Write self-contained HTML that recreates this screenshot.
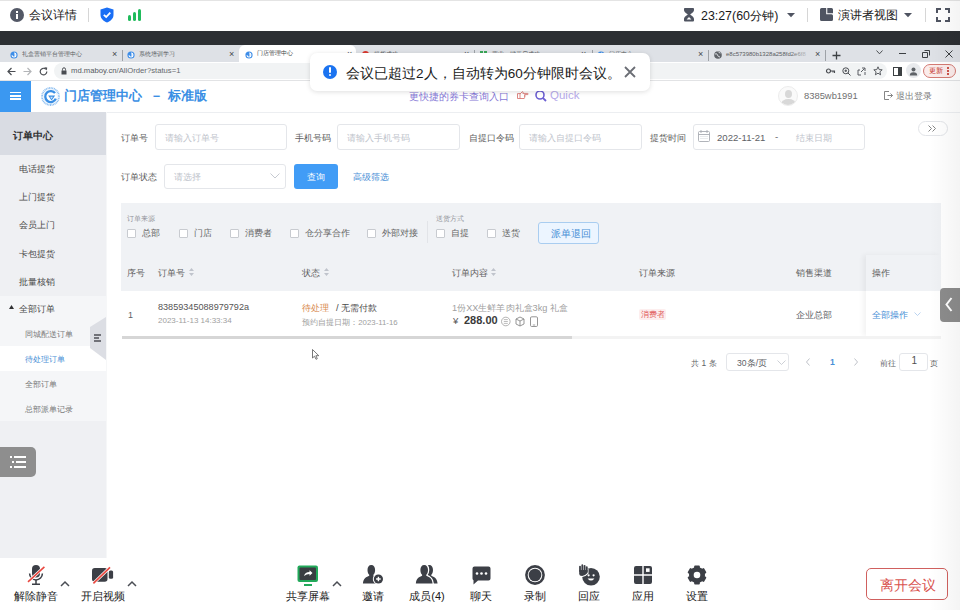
<!DOCTYPE html>
<html><head><meta charset="utf-8">
<style>
*{margin:0;padding:0;box-sizing:border-box}
html,body{width:960px;height:610px;overflow:hidden;background:#fff;font-family:"Liberation Sans",sans-serif}
.a{position:absolute}
.t{position:absolute;white-space:nowrap;line-height:1}
svg{position:absolute;overflow:visible}
.nocjk .cj{-webkit-text-stroke:0.04em currentColor}
.nocjk .cjb{-webkit-text-stroke:0.1em currentColor}
</style></head><body>
<!-- meeting top bar -->
<div class="a" style="left:0;top:0;width:960px;height:1px;background:#e4e4e4"></div>
<div class="a" style="left:10px;top:8px;width:14px;height:14px;border-radius:50%;background:#535866"></div>
<div class="a" style="left:16px;top:11px;width:2px;height:2px;background:#fff"></div>
<div class="a" style="left:16px;top:14px;width:2px;height:5px;background:#fff"></div>
<div class="t" style="left:29px;top:9px;font-size:12px;color:#1a1a1a;width:48.3px;text-align-last:justify">会议详情</div>
<div class="a" style="left:88px;top:8px;width:1px;height:14px;background:#d6d6d6"></div>
<svg style="left:100px;top:7px" width="14" height="16" viewBox="0 0 14 16"><path d="M7 0.5 L13.5 2.5 V8 C13.5 11.5 10.5 14 7 15.5 C3.5 14 0.5 11.5 0.5 8 V2.5 Z" fill="#1a6ff5"/><path d="M3.8 7.8 L6.2 10 L10.3 5.6" stroke="#fff" stroke-width="1.8" fill="none"/></svg>
<div class="a" style="left:128px;top:15px;width:3px;height:6px;background:#20bb5c;border-radius:1.5px"></div>
<div class="a" style="left:133px;top:12px;width:3px;height:9px;background:#20bb5c;border-radius:1.5px"></div>
<div class="a" style="left:138px;top:9px;width:3px;height:12px;background:#20bb5c;border-radius:1.5px"></div>

<svg style="left:683px;top:7px" width="12" height="15" viewBox="0 0 12 15"><path d="M1.8 1 H10.2 Q11 1 11 2 V3 C11 5.5 8 6.5 7.3 7.5 C8 8.5 11 9.5 11 12 V13.5 Q11 14.6 10 14.6 H2 Q1 14.6 1 13.5 V12 C1 9.5 4 8.5 4.7 7.5 C4 6.5 1 5.5 1 3 V2 Q1 1 1.8 1Z" fill="#4f5461"/><path d="M3.6 12.6 H8.4 L6 9.9Z" fill="#fff"/></svg>
<div class="t" style="left:701px;top:9.5px;font-size:12.4px;color:#1a1a1a;width:77.3px;text-align-last:justify">23:27(60分钟)</div>
<svg style="left:787px;top:13px" width="8" height="5"><path d="M0 0 H8 L4 4.2 Z" fill="#4f5461"/></svg>
<div class="a" style="left:807px;top:8px;width:1px;height:14px;background:#d6d6d6"></div>
<svg style="left:819.5px;top:8.2px" width="13" height="13" viewBox="0 0 13 13"><path d="M1.5 0 H6.2 V6.3 H11.5 A1.5 1.5 0 0 1 13 7.8 V11.5 A1.5 1.5 0 0 1 11.5 13 H1.5 A1.5 1.5 0 0 1 0 11.5 V1.5 A1.5 1.5 0 0 1 1.5 0Z M7.3 0 H11.5 A1.5 1.5 0 0 1 13 1.5 V5.3 H7.3Z" fill="#4f5461"/></svg>
<div class="t" style="left:838px;top:9px;font-size:12px;color:#1a1a1a;width:60.3px;text-align-last:justify">演讲者视图</div>
<svg style="left:903.5px;top:13px" width="8" height="5"><path d="M0 0 H8 L4 4.2 Z" fill="#4f5461"/></svg>
<div class="a" style="left:925px;top:8px;width:1px;height:14px;background:#d6d6d6"></div>
<svg style="left:936px;top:8px" width="14" height="14" viewBox="0 0 14 14"><path d="M1 5 V1 H5 M9 1 H13 V5 M13 9 V13 H9 M5 13 H1 V9" stroke="#4f5461" stroke-width="2" fill="none"/></svg>

<!-- dark bar -->
<div class="a" style="left:0;top:31px;width:960px;height:14px;background:#2c2f33"></div>

<!-- tab bar -->
<div class="a" style="left:0;top:45px;width:960px;height:17px;background:#dee1e6"></div>

<div class="a" style="left:0;top:62px;width:960px;height:18px;background:#fff"></div>
<!-- tab 1 -->
<svg style="left:10px;top:50.5px" width="8" height="8" viewBox="0 0 8 8"><circle cx="4" cy="4" r="3.6" fill="#3d8de8"/><path d="M2 4.2 A2 2 0 1 0 4 2 M4 4 H6" stroke="#fff" stroke-width="1.1" fill="none"/></svg>
<div class="t" style="left:22px;top:50.5px;font-size:6px;color:#5a5d62;width:60.3px;text-align-last:justify">礼盒营销平台管理中心</div>
<div class="t" style="left:112px;top:49.5px;font-size:9px;color:#45484d">×</div>
<div class="a" style="left:122px;top:49.5px;width:1px;height:11px;background:#9ea2a7"></div>
<!-- tab 2 -->
<svg style="left:127px;top:50.5px" width="8" height="8" viewBox="0 0 8 8"><circle cx="4" cy="4" r="3.6" fill="#3d8de8"/><path d="M2 4.2 A2 2 0 1 0 4 2 M4 4 H6" stroke="#fff" stroke-width="1.1" fill="none"/></svg>
<div class="t" style="left:139px;top:50.5px;font-size:6px;color:#5a5d62;width:36.3px;text-align-last:justify">系统培训学习</div>
<div class="t" style="left:229px;top:49.5px;font-size:9px;color:#45484d">×</div>
<!-- active tab 3 -->
<div class="a" style="left:239px;top:45px;width:117px;height:17px;background:#fff;border-radius:6px 6px 0 0"></div>
<svg style="left:245px;top:50.5px" width="8" height="8" viewBox="0 0 8 8"><circle cx="4" cy="4" r="3.6" fill="#3d8de8"/><path d="M2 4.2 A2 2 0 1 0 4 2 M4 4 H6" stroke="#fff" stroke-width="1.1" fill="none"/></svg>
<div class="t" style="left:257px;top:50px;font-size:6px;color:#3c3f44;width:36.3px;text-align-last:justify">门店管理中心</div>
<div class="t" style="left:347px;top:49.5px;font-size:9px;color:#45484d">×</div>
<!-- tab 4 -->
<div class="a" style="left:362px;top:50.5px;width:7px;height:7px;border-radius:50%;background:#d93a30"></div>
<div class="t" style="left:374px;top:50.5px;font-size:6px;color:#5a5d62;width:24.3px;text-align-last:justify">提货成功</div>
<div class="t" style="left:464px;top:49.5px;font-size:9px;color:#45484d">×</div>
<div class="a" style="left:474px;top:49.5px;width:1px;height:11px;background:#9ea2a7"></div>
<!-- tab 5 -->
<div class="a" style="left:480px;top:50.5px;width:3px;height:3px;background:#3aa757"></div>
<div class="a" style="left:484px;top:50.5px;width:3px;height:3px;background:#3aa757"></div>
<div class="a" style="left:480px;top:54.5px;width:3px;height:3px;background:#3aa757"></div>
<div class="a" style="left:484px;top:54.5px;width:3px;height:3px;background:#f3b300"></div>
<div class="t" style="left:492px;top:50.5px;font-size:6px;color:#5a5d62;width:48.3px;text-align-last:justify">营业一键开启成功</div>
<div class="t" style="left:581px;top:49.5px;font-size:9px;color:#45484d">×</div>
<div class="a" style="left:592px;top:49.5px;width:1px;height:11px;background:#9ea2a7"></div>
<!-- tab 6 -->
<svg style="left:597px;top:50.5px" width="8" height="8" viewBox="0 0 8 8"><circle cx="4" cy="4" r="3.6" fill="#3d8de8"/><path d="M2 4.2 A2 2 0 1 0 4 2 M4 4 H6" stroke="#fff" stroke-width="1.1" fill="none"/></svg>
<div class="t" style="left:609px;top:50.5px;font-size:6px;color:#5a5d62;width:24.3px;text-align-last:justify">门店中心</div>
<div class="t" style="left:698px;top:49.5px;font-size:9px;color:#45484d">×</div>
<div class="a" style="left:708px;top:49.5px;width:1px;height:11px;background:#9ea2a7"></div>
<!-- tab 7 -->
<svg style="left:714px;top:50.5px" width="8" height="8" viewBox="0 0 8 8"><circle cx="4" cy="4" r="3.8" fill="#5f6368"/><path d="M1 3 Q3 2 3.5 4 T6 6 M4 0.5 Q5 2 6.5 2" stroke="#dee1e6" stroke-width="1" fill="none"/></svg>
<div class="t" style="left:726px;top:50.5px;font-size:6px;color:#5a5d62">e8c573980b1328a258fd2e6f8</div>
<div class="a" style="left:790px;top:45px;width:22px;height:17px;background:linear-gradient(90deg,rgba(222,225,230,0),#dee1e6)"></div>
<div class="t" style="left:815px;top:49.5px;font-size:9px;color:#45484d">×</div>
<div class="a" style="left:825px;top:49.5px;width:1px;height:11px;background:#9ea2a7"></div>
<svg style="left:832px;top:50.5px" width="9" height="9"><path d="M4.5 0.5 V8.5 M0.5 4.5 H8.5" stroke="#3c4043" stroke-width="1.3"/></svg>
<svg style="left:876px;top:50px" width="7" height="5"><path d="M0.5 0.5 L3.5 3.8 L6.5 0.5" stroke="#3c4043" stroke-width="0.9" fill="none"/></svg>
<div class="a" style="left:899px;top:53px;width:7px;height:1px;background:#3c4043"></div>
<svg style="left:922px;top:50px" width="8" height="8"><path d="M2.5 0.5 H7.5 V5.5 M0.5 2.5 H5.5 V7.5 H0.5 Z" stroke="#3c4043" stroke-width="1" fill="none"/></svg>
<svg style="left:945px;top:50px" width="8" height="8"><path d="M0.5 0.5 L7.5 7.5 M7.5 0.5 L0.5 7.5" stroke="#3c4043" stroke-width="1"/></svg>
<!-- address row -->
<svg style="left:7px;top:67px" width="9" height="9"><path d="M8.5 4.5 H1 M4.5 1 L1 4.5 L4.5 8" stroke="#4a4d52" stroke-width="1.2" fill="none"/></svg>
<svg style="left:23px;top:67px" width="9" height="9"><path d="M0.5 4.5 H8 M4.5 1 L8 4.5 L4.5 8" stroke="#b3b5b8" stroke-width="1.2" fill="none"/></svg>
<svg style="left:39px;top:67px" width="9" height="9"><path d="M7.8 4.5 A3.3 3.3 0 1 1 6.8 2.2" stroke="#4a4d52" stroke-width="1.2" fill="none"/><path d="M5.2 0.3 L8.2 0.6 L7.9 3.6Z" fill="#4a4d52"/></svg>
<div class="a" style="left:54px;top:63px;width:833px;height:16px;border-radius:8px;background:#f1f3f4"></div>
<svg style="left:61px;top:67px" width="6" height="8"><path d="M1.5 3.5 V2.3 A1.5 1.5 0 0 1 4.5 2.3 V3.5" stroke="#4a4d52" stroke-width="1" fill="none"/><rect x="0.5" y="3.5" width="5" height="4" fill="#4a4d52"/></svg>
<div class="t" style="left:71px;top:67px;font-size:7.7px;color:#55595e">md.maboy.cn<span style="color:#65696e">/AllOrder?status=1</span></div>
<svg style="left:826px;top:68px" width="9" height="6"><circle cx="2.5" cy="3" r="2" stroke="#4a4d52" stroke-width="1.2" fill="none"/><path d="M4.5 3 H8.5 V5 M7 3 V4.5" stroke="#4a4d52" stroke-width="1.1" fill="none"/></svg>
<svg style="left:842px;top:67px" width="9" height="9"><circle cx="3.8" cy="3.8" r="3" stroke="#4a4d52" stroke-width="1" fill="none"/><path d="M6 6 L8.5 8.5 M2.5 3.8 H5 M3.8 2.5 V5" stroke="#4a4d52" stroke-width="1" fill="none"/></svg>
<svg style="left:857px;top:67px" width="9" height="9"><path d="M4 8 H1 V3 H3 M8 8 V5 M4 5 L7.5 1.5 M5 1 H8 V4" stroke="#4a4d52" stroke-width="0.9" fill="none"/></svg>
<svg style="left:873px;top:66px" width="10" height="10"><path d="M5 0.8 L6.2 3.6 L9.2 3.8 L6.9 5.8 L7.6 8.8 L5 7.2 L2.4 8.8 L3.1 5.8 L0.8 3.8 L3.8 3.6Z" stroke="#4a4d52" stroke-width="0.9" fill="none"/></svg>
<svg style="left:893px;top:67px" width="9" height="9"><rect x="0.5" y="0.5" width="8" height="8" stroke="#3c4043" stroke-width="1" fill="none"/><rect x="5" y="0.5" width="3.5" height="8" fill="#3c4043"/></svg>
<div class="a" style="left:906px;top:63px;width:15px;height:15px;border-radius:50%;background:#e8eaed"></div>
<svg style="left:909px;top:67px" width="9" height="9"><circle cx="4.5" cy="2.6" r="2" fill="#5f6368"/><path d="M0.8 8.5 A3.7 3.2 0 0 1 8.2 8.5Z" fill="#5f6368"/></svg>
<div class="a" style="left:923px;top:64px;width:33px;height:14px;border-radius:7px;border:1px solid #d47a73;background:#fbeceb"></div>
<div class="t" style="left:929px;top:67px;font-size:7px;color:#c5382e;width:14.3px;text-align-last:justify">更新</div>
<div class="a" style="left:947px;top:67px;width:1.5px;height:1.5px;background:#c5382e;border-radius:50%"></div>
<div class="a" style="left:947px;top:70px;width:1.5px;height:1.5px;background:#c5382e;border-radius:50%"></div>
<div class="a" style="left:947px;top:73px;width:1.5px;height:1.5px;background:#c5382e;border-radius:50%"></div>


<!-- address bar -->

<div class="a" style="left:0;top:80px;width:960px;height:1px;background:#e2e3e5"></div>

<!-- site header -->
<div class="a" style="left:0;top:81px;width:960px;height:31px;background:#fff"></div>
<div class="a" style="left:0;top:81px;width:31px;height:31px;background:#3b98f1"></div>
<div class="a" style="left:0;top:112px;width:960px;height:1px;background:#eceef1"></div>
<!-- hamburger -->
<div class="a" style="left:10px;top:91.5px;width:11px;height:1.8px;background:#fff"></div>
<div class="a" style="left:10px;top:94.9px;width:11px;height:1.8px;background:#fff"></div>
<div class="a" style="left:10px;top:98.3px;width:11px;height:1.8px;background:#fff"></div>
<!-- logo -->
<svg style="left:41px;top:87px" width="19" height="19" viewBox="0 0 19 19"><circle cx="9.5" cy="9.5" r="8.5" stroke="#8cbef0" stroke-width="1.8" stroke-dasharray="1 0.6" fill="none"/><circle cx="9.5" cy="9.5" r="6.9" stroke="#d6e8fa" stroke-width="0.6" fill="none"/><path d="M14 6.2 C12.3 3.8 8.3 3.4 5.9 5.6 C3.5 7.8 3.8 12 6.5 14 C9.5 16.2 13.6 14.8 14.8 11.6" stroke="#3a8fe4" stroke-width="2.3" fill="none"/><path d="M7.2 8.6 H14.2 L10.5 13.6Z" fill="#3a8fe4"/><path d="M9.2 9.8 H12 L10.5 12Z" fill="#cfe4fa"/></svg>
<div class="t" style="left:64px;top:89px;font-size:13.4px;font-weight:bold;color:#3a8fe4;width:143.3px;text-align-last:justify">门店管理中心<span style="display:inline-block;width:8px"></span>－<span style="display:inline-block;width:5px"></span>标准版</div>
<div class="t" style="left:409px;top:92px;font-size:9.9px;color:#8577d6;width:100.3px;text-align-last:justify">更快捷的券卡查询入口</div>
<svg style="left:517px;top:91px" width="12" height="8" viewBox="0 0 12 8"><path d="M0.5 2.6 H3 V7.5 H0.5Z M3 3 L5.2 0.8 Q5.9 0.4 6.1 1.2 L5.8 2.4 H10.8 Q11.7 2.8 10.8 3.6 H7.6 M3 7.5 H7.2 Q7.8 7.2 7.6 6.3 M7.6 3.6 V6.3 M7.6 5 H8.6" stroke="#d66a66" stroke-width="0.8" fill="none"/></svg>
<svg style="left:535px;top:90px" width="12" height="12" viewBox="0 0 12 12"><circle cx="5" cy="5" r="4" stroke="#6c5fd3" stroke-width="1.6" fill="none"/><path d="M7.8 7.8 L11 11" stroke="#6c5fd3" stroke-width="1.8"/></svg>
<div class="t" style="left:550px;top:90px;font-size:11.5px;color:#b6aaea">Quick</div>
<div class="a" style="left:778px;top:86px;width:20px;height:20px;border-radius:50%;border:1px solid #ececec;background:#fafafa;overflow:hidden"><div class="a" style="left:6px;top:3px;width:7px;height:8px;border-radius:50%;background:#d8d8d8"></div><div class="a" style="left:2px;top:12px;width:15px;height:10px;border-radius:50% 50% 0 0;background:#d8d8d8"></div></div>
<div class="t" style="left:804px;top:91px;font-size:9.4px;color:#707070">8385wb1991</div>
<svg style="left:884px;top:91px" width="9" height="9" viewBox="0 0 9 9"><path d="M5 0.5 H0.5 V8.5 H5 M3.5 4.5 H8.5 M6.5 2.5 L8.5 4.5 L6.5 6.5" stroke="#777" stroke-width="0.9" fill="none"/></svg>
<div class="t" style="left:896px;top:92px;font-size:9px;color:#777;width:36.3px;text-align-last:justify">退出登录</div>


<!-- sidebar -->
<div class="a" style="left:0;top:112px;width:106px;height:446px;background:#eff0f3"></div>
<div class="a" style="left:0;top:112px;width:106px;height:43px;background:#d9dce3"></div>
<div class="t" style="left:13px;top:130.5px;font-size:10px;font-weight:bold;color:#303133;width:40.3px;text-align-last:justify">订单中心</div>
<div class="t" style="left:19px;top:164.5px;font-size:9px;color:#4a4a4a;width:36.3px;text-align-last:justify">电话提货</div>
<div class="t" style="left:19px;top:192.5px;font-size:9px;color:#4a4a4a;width:36.3px;text-align-last:justify">上门提货</div>
<div class="t" style="left:19px;top:220.5px;font-size:9px;color:#4a4a4a;width:36.3px;text-align-last:justify">会员上门</div>
<div class="t" style="left:19px;top:249.5px;font-size:9px;color:#4a4a4a;width:36.3px;text-align-last:justify">卡包提货</div>
<div class="t" style="left:19px;top:277.5px;font-size:9px;color:#4a4a4a;width:36.3px;text-align-last:justify">批量核销</div>
<div class="a" style="left:0;top:296px;width:106px;height:125px;background:#f5f6f8"></div>
<svg style="left:9px;top:305px" width="5" height="4"><path d="M0 4 L2.5 0 L5 4Z" fill="#303133"/></svg>
<div class="t" style="left:19px;top:304.5px;font-size:9px;color:#4a4a4a;width:36.3px;text-align-last:justify">全部订单</div>
<div class="t" style="left:25px;top:331px;font-size:8.2px;color:#7a7a7a;width:48.3px;text-align-last:justify">同城配送订单</div>
<div class="a" style="left:0;top:346px;width:106px;height:25px;background:#fff"></div>
<div class="t" style="left:25px;top:356px;font-size:8.2px;color:#4a8fd6;width:40.3px;text-align-last:justify">待处理订单</div>
<div class="t" style="left:25px;top:381px;font-size:8.2px;color:#7a7a7a;width:32.3px;text-align-last:justify">全部订单</div>
<div class="t" style="left:25px;top:406px;font-size:8.2px;color:#7a7a7a;width:48.3px;text-align-last:justify">总部派单记录</div>
<svg style="left:90px;top:317px" width="16" height="43" viewBox="0 0 16 43"><path d="M0 10 L16 0 V43 L0 31Z" fill="#dcdee4"/><path d="M4 18 H11 M4 21 H9 M4 24 H11" stroke="#4d4f55" stroke-width="1.4"/></svg>
<div class="a" style="left:0;top:447px;width:36px;height:30px;border-radius:0 5px 5px 0;background:#8e8e8e"></div>
<div class="a" style="left:10px;top:456px;width:2px;height:2px;background:#fff"></div>
<div class="a" style="left:14px;top:456px;width:12px;height:2px;background:#fff"></div>
<div class="a" style="left:12px;top:461px;width:2px;height:2px;background:#fff"></div>
<div class="a" style="left:16px;top:461px;width:10px;height:2px;background:#fff"></div>
<div class="a" style="left:10px;top:466px;width:2px;height:2px;background:#fff"></div>
<div class="a" style="left:14px;top:466px;width:12px;height:2px;background:#fff"></div>


<!-- filter panel gray -->
<div class="a" style="left:121px;top:203px;width:820px;height:88px;background:#f0f2f5"></div>
<!-- main form -->
<div class="a" style="left:106px;top:112px;width:1px;height:446px;background:#f6f7f8"></div>
<div class="t" style="left:121px;top:134px;font-size:9px;color:#606060;width:27.3px;text-align-last:justify">订单号</div>
<div class="a" style="left:155px;top:124px;width:132px;height:26px;border:1px solid #e4e6ea;border-radius:3px;background:#fff"></div>
<div class="t" style="left:165px;top:134px;font-size:8.8px;color:#c0c4cc;width:54.3px;text-align-last:justify">请输入订单号</div>
<div class="t" style="left:295px;top:134px;font-size:9px;color:#606060;width:36.3px;text-align-last:justify">手机号码</div>
<div class="a" style="left:337px;top:124px;width:123px;height:26px;border:1px solid #e4e6ea;border-radius:3px;background:#fff"></div>
<div class="t" style="left:347px;top:134px;font-size:8.8px;color:#c0c4cc;width:63.3px;text-align-last:justify">请输入手机号码</div>
<div class="t" style="left:469px;top:134px;font-size:9px;color:#606060;width:45.3px;text-align-last:justify">自提口令码</div>
<div class="a" style="left:519px;top:124px;width:123px;height:26px;border:1px solid #e4e6ea;border-radius:3px;background:#fff"></div>
<div class="t" style="left:529px;top:134px;font-size:8.8px;color:#c0c4cc;width:72.3px;text-align-last:justify">请输入自提口令码</div>
<div class="t" style="left:650px;top:134px;font-size:9px;color:#606060;width:36.3px;text-align-last:justify">提货时间</div>
<div class="a" style="left:693px;top:124px;width:172px;height:26px;border:1px solid #e4e6ea;border-radius:3px;background:#fff"></div>
<svg style="left:698px;top:130px" width="12" height="12" viewBox="0 0 12 12"><rect x="0.5" y="1.5" width="11" height="10" rx="1" stroke="#a8abb2" stroke-width="0.9" fill="none"/><path d="M0.5 4.5 H11.5 M3 0 V3 M9 0 V3" stroke="#a8abb2" stroke-width="0.9"/><path d="M2.5 6.5 H9.5 M2.5 8.5 H9.5" stroke="#c8cbd2" stroke-width="0.8" stroke-dasharray="1 1"/></svg>
<div class="t" style="left:717px;top:133px;font-size:9.6px;color:#606266">2022-11-21</div>
<div class="t" style="left:775px;top:132px;font-size:9.6px;color:#606266">-</div>
<div class="t" style="left:796px;top:134px;font-size:8.8px;color:#c0c4cc;width:36.3px;text-align-last:justify">结束日期</div>
<div class="a" style="left:918px;top:121px;width:30px;height:15px;border:1px solid #e2e4e8;border-radius:8px;background:#fff"></div>
<svg style="left:928px;top:125px" width="9" height="7"><path d="M0.5 0.5 L3.5 3.5 L0.5 6.5 M4.5 0.5 L7.5 3.5 L4.5 6.5" stroke="#777" stroke-width="0.9" fill="none"/></svg>
<div class="t" style="left:121px;top:173px;font-size:9px;color:#606060;width:36.3px;text-align-last:justify">订单状态</div>
<div class="a" style="left:164px;top:164px;width:122px;height:25px;border:1px solid #e4e6ea;border-radius:3px;background:#fff"></div>
<div class="t" style="left:174px;top:173px;font-size:8.8px;color:#c0c4cc;width:27.3px;text-align-last:justify">请选择</div>
<svg style="left:270px;top:173px" width="10" height="6"><path d="M0.5 0.5 L5 5 L9.5 0.5" stroke="#c0c4cc" stroke-width="0.9" fill="none"/></svg>
<div class="a" style="left:294px;top:164px;width:44px;height:25px;border-radius:3px;background:#419cf6"></div>
<div class="t" style="left:307px;top:173px;font-size:9px;color:#fff;width:18.3px;text-align-last:justify">查询</div>
<div class="t" style="left:353px;top:173px;font-size:9px;color:#4a90d6;width:36.3px;text-align-last:justify">高级筛选</div>

<!-- filter panel contents -->
<div class="t" style="left:127px;top:214.5px;font-size:7.4px;color:#909399;width:28.3px;text-align-last:justify">订单来源</div>
<div class="a" style="left:127px;top:229px;width:9px;height:9px;border:1px solid #c8cbd0;border-radius:1px;background:#fff"></div>
<div class="t" style="left:142px;top:229px;font-size:9px;color:#666;width:18.3px;text-align-last:justify">总部</div>
<div class="a" style="left:179px;top:229px;width:9px;height:9px;border:1px solid #c8cbd0;border-radius:1px;background:#fff"></div>
<div class="t" style="left:194px;top:229px;font-size:9px;color:#666;width:18.3px;text-align-last:justify">门店</div>
<div class="a" style="left:230px;top:229px;width:9px;height:9px;border:1px solid #c8cbd0;border-radius:1px;background:#fff"></div>
<div class="t" style="left:245px;top:229px;font-size:9px;color:#666;width:27.3px;text-align-last:justify">消费者</div>
<div class="a" style="left:290px;top:229px;width:9px;height:9px;border:1px solid #c8cbd0;border-radius:1px;background:#fff"></div>
<div class="t" style="left:305px;top:229px;font-size:9px;color:#666;width:45.3px;text-align-last:justify">仓分享合作</div>
<div class="a" style="left:367px;top:229px;width:9px;height:9px;border:1px solid #c8cbd0;border-radius:1px;background:#fff"></div>
<div class="t" style="left:382px;top:229px;font-size:9px;color:#666;width:36.3px;text-align-last:justify">外部对接</div>
<div class="a" style="left:427px;top:221px;width:1px;height:22px;background:#e2e4e8"></div>
<div class="t" style="left:436px;top:214.5px;font-size:7.4px;color:#909399;width:28.3px;text-align-last:justify">送货方式</div>
<div class="a" style="left:436px;top:229px;width:9px;height:9px;border:1px solid #c8cbd0;border-radius:1px;background:#fff"></div>
<div class="t" style="left:451px;top:229px;font-size:9px;color:#666;width:18.3px;text-align-last:justify">自提</div>
<div class="a" style="left:487px;top:229px;width:9px;height:9px;border:1px solid #c8cbd0;border-radius:1px;background:#fff"></div>
<div class="t" style="left:502px;top:229px;font-size:9px;color:#666;width:18.3px;text-align-last:justify">送货</div>
<div class="a" style="left:538px;top:222px;width:61px;height:22px;border:1px solid #a9cdf0;border-radius:3px;background:#ecf5ff"></div>
<div class="t" style="left:551px;top:229px;font-size:9.5px;color:#4a90d6;width:40.3px;text-align-last:justify">派单退回</div>

<!-- table header -->
<div class="t" style="left:127px;top:269px;font-size:9px;color:#606060;width:18.3px;text-align-last:justify">序号</div>
<div class="t" style="left:158px;top:269px;font-size:9px;color:#606060;width:27.3px;text-align-last:justify">订单号</div>
<svg style="left:189px;top:268px" width="5" height="8"><path d="M0 3 L2.5 0 L5 3Z M0 5 L2.5 8 L5 5Z" fill="#c0c4cc"/></svg>
<div class="t" style="left:302px;top:269px;font-size:9px;color:#606060;width:18.3px;text-align-last:justify">状态</div>
<svg style="left:324px;top:268px" width="5" height="8"><path d="M0 3 L2.5 0 L5 3Z M0 5 L2.5 8 L5 5Z" fill="#c0c4cc"/></svg>
<div class="t" style="left:452px;top:269px;font-size:9px;color:#606060;width:36.3px;text-align-last:justify">订单内容</div>
<svg style="left:491px;top:268px" width="5" height="8"><path d="M0 3 L2.5 0 L5 3Z M0 5 L2.5 8 L5 5Z" fill="#c0c4cc"/></svg>
<div class="t" style="left:639px;top:269px;font-size:9px;color:#606060;width:36.3px;text-align-last:justify">订单来源</div>
<div class="t" style="left:796px;top:269px;font-size:9px;color:#606060;width:36.3px;text-align-last:justify">销售渠道</div>
<!-- row -->
<div class="a" style="left:122px;top:291px;width:819px;height:45px;background:#fff"></div>
<div class="t" style="left:128px;top:311px;font-size:9px;color:#606266">1</div>
<div class="t" style="left:158px;top:303px;font-size:9.1px;color:#555">83859345088979792a</div>
<div class="t" style="left:158px;top:317px;font-size:8px;color:#a0a0a0">2023-11-13 14:33:34</div>
<div class="t" style="left:302px;top:303px;font-size:9.4px;color:#d88a4f;width:27.3px;text-align-last:justify">待处理</div>
<div class="t" style="left:336px;top:303px;font-size:9.4px;color:#4a4a4a;width:41.5px;text-align-last:justify">/ 无需付款</div>
<div class="t" style="left:302px;top:319px;font-size:7.8px;color:#a0a0a0;width:95.6px;text-align-last:justify">预约自提日期：2023-11-16</div>
<div class="t" style="left:452px;top:304px;font-size:9.2px;color:#a0a0a0;width:116.0px;text-align-last:justify">1份XX生鲜羊肉礼盒3kg 礼盒</div>
<div class="t" style="left:453px;top:316px;font-size:9.5px;color:#555">¥</div>
<div class="t" style="left:464px;top:315px;font-size:11px;font-weight:bold;color:#3a3a3a">288.00</div>
<svg style="left:501px;top:315.5px" width="40" height="11" viewBox="0 0 40 11"><circle cx="4.8" cy="5.5" r="4.3" stroke="#a0a0a0" stroke-width="0.8" fill="none"/><path d="M2.8 3.6 H6.8 M2.8 5.5 H6.8 M2.8 7.4 H6.8" stroke="#a0a0a0" stroke-width="0.7"/><path d="M19 1 L23 3 V8 L19 10 L15 8 V3Z M15 3 L19 5 L23 3 M19 5 V10" stroke="#8a8a8a" stroke-width="0.9" fill="none"/><rect x="29.5" y="0.8" width="7" height="9.7" rx="1.2" stroke="#8a8a8a" stroke-width="0.9" fill="none"/><path d="M31.8 9 H34.2" stroke="#8a8a8a" stroke-width="0.8"/></svg>
<div class="a" style="left:639px;top:309px;width:27px;height:11px;border-radius:2px;background:#fdeeee"></div>
<div class="t" style="left:641px;top:311px;font-size:7.5px;color:#e05b5b;width:24.3px;text-align-last:justify">消费者</div>
<div class="t" style="left:796px;top:311px;font-size:9px;color:#606266;width:36.3px;text-align-last:justify">企业总部</div>
<!-- fixed column -->
<div class="a" style="left:866px;top:255px;width:75px;height:81px;box-shadow:-3px 0 5px rgba(0,0,0,0.05)"></div>
<div class="a" style="left:866px;top:255px;width:75px;height:36px;background:#f0f2f5"></div>
<div class="a" style="left:866px;top:291px;width:75px;height:45px;background:#fff"></div>
<div class="t" style="left:872px;top:269px;font-size:9px;color:#606060;width:18.3px;text-align-last:justify">操作</div>
<div class="t" style="left:872px;top:311px;font-size:9px;color:#4a90d6;width:36.3px;text-align-last:justify">全部操作</div>
<svg style="left:914px;top:312px" width="7" height="4"><path d="M0.5 0.5 L3.5 3.5 L6.5 0.5" stroke="#a8c8ec" stroke-width="0.8" fill="none"/></svg>
<!-- scrollbar -->
<div class="a" style="left:122px;top:336px;width:819px;height:3px;background:#f3f3f3"></div>
<div class="a" style="left:122px;top:336px;width:450px;height:3px;background:#d6d6d6"></div>

<!-- pagination -->
<div class="t" style="left:691px;top:359px;font-size:8.4px;color:#606266;width:25.6px;text-align-last:justify">共 1 条</div>
<div class="a" style="left:726px;top:353px;width:63px;height:18px;border:1px solid #e4e6ea;border-radius:3px;background:#fff"></div>
<div class="t" style="left:737px;top:359px;font-size:8.6px;color:#606266;width:30.3px;text-align-last:justify">30条/页</div>
<svg style="left:777px;top:360px" width="9" height="5"><path d="M0.5 0.5 L4.5 4.5 L8.5 0.5" stroke="#c0c4cc" stroke-width="0.8" fill="none"/></svg>
<svg style="left:806px;top:358px" width="4" height="8"><path d="M3.5 0.5 L0.5 4 L3.5 7.5" stroke="#b8bbc2" stroke-width="0.9" fill="none"/></svg>
<div class="t" style="left:830px;top:358px;font-size:8.6px;font-weight:bold;color:#4a90d6">1</div>
<svg style="left:854px;top:358px" width="4" height="8"><path d="M0.5 0.5 L3.5 4 L0.5 7.5" stroke="#b8bbc2" stroke-width="0.9" fill="none"/></svg>
<div class="t" style="left:880px;top:359px;font-size:8.4px;color:#606266;width:16.3px;text-align-last:justify">前往</div>
<div class="a" style="left:899px;top:353px;width:29px;height:18px;border:1px solid #e4e6ea;border-radius:3px;background:#fff"></div>
<div class="t" style="left:911.5px;top:356px;font-size:10px;color:#505050">1</div>
<div class="t" style="left:930px;top:359px;font-size:8.4px;color:#606266;width:8.3px;text-align-last:justify">页</div>

<!-- cursor -->
<svg style="left:312px;top:349px" width="8" height="11" viewBox="0 0 8 11"><path d="M0.5 0.5 V9 L2.5 7.2 L4 10.3 L5.3 9.7 L3.9 6.7 H6.8 Z" fill="#fff" stroke="#555" stroke-width="0.8"/></svg>

<!-- right gray tab -->
<div class="a" style="left:940px;top:288px;width:20px;height:34px;border-radius:4px 0 0 4px;background:#8c8c8c"></div>
<svg style="left:945px;top:297px" width="8" height="15"><path d="M6.5 1 L1.5 7.5 L6.5 14" stroke="#fff" stroke-width="2" fill="none"/></svg>


<!-- bottom toolbar -->
<div class="a" style="left:0;top:558px;width:960px;height:52px;background:#fff"></div>
<!-- mic -->
<svg style="left:26px;top:564px" width="20" height="22" viewBox="0 0 20 22"><rect x="6" y="1" width="8" height="12.5" rx="4" fill="#3c3f46"/><path d="M3.6 9.5 A6.4 6.4 0 0 0 16.4 9.5" stroke="#3c3f46" stroke-width="1.5" fill="none"/><path d="M10 16 V20 M6 20.2 H14" stroke="#3c3f46" stroke-width="1.5"/><path d="M2 17.8 L18.4 2.8" stroke="#fff" stroke-width="3"/><path d="M2 17.8 L18.4 2.8" stroke="#e8473f" stroke-width="1.6"/></svg>
<svg style="left:60px;top:581px" width="10" height="6"><path d="M1 5 L5 1 L9 5" stroke="#4a4d54" stroke-width="1.5" fill="none"/></svg>
<div class="t" style="left:14px;top:591px;font-size:11px;color:#1a1a1a;width:44.3px;text-align-last:justify">解除静音</div>
<svg style="left:91px;top:566px" width="23" height="19" viewBox="0 0 23 19"><rect x="1" y="2" width="15.5" height="13.8" rx="2.8" fill="#3c3f46"/><rect x="17.8" y="4.5" width="4.3" height="8.2" rx="1.5" fill="#3c3f46"/><path d="M2.4 17.4 L19 1.4" stroke="#fff" stroke-width="3"/><path d="M2.4 17.4 L19 1.4" stroke="#e8473f" stroke-width="1.6"/></svg>
<svg style="left:127px;top:581px" width="10" height="6"><path d="M1 5 L5 1 L9 5" stroke="#4a4d54" stroke-width="1.5" fill="none"/></svg>
<div class="t" style="left:81px;top:591px;font-size:11px;color:#1a1a1a;width:44.3px;text-align-last:justify">开启视频</div>
<!-- share -->
<svg style="left:297px;top:565px" width="22" height="22" viewBox="0 0 22 22"><rect x="0.5" y="0.5" width="20.5" height="16.5" rx="2" fill="#22a95a"/><rect x="2.5" y="2.5" width="16.5" height="12.5" rx="1" fill="#3a3d42"/><path d="M7 11 Q8 7 12.5 7 V5.2 L15.5 8 L12.5 10.8 V9 Q9.5 9 7 11Z" fill="#fff"/><rect x="7" y="19" width="8" height="2" fill="#22a95a"/></svg>
<svg style="left:332px;top:581px" width="10" height="6"><path d="M1 5 L5 1 L9 5" stroke="#4a4d54" stroke-width="1.5" fill="none"/></svg>
<div class="t" style="left:286px;top:591px;font-size:11px;color:#1a1a1a;width:44.3px;text-align-last:justify">共享屏幕</div>
<!-- invite -->
<svg style="left:362px;top:564px" width="23" height="21" viewBox="0 0 23 21"><path d="M9.3 1 C11.77 1 13.1 3 13.1 6 C13.1 8.3 12.34 9.8 11.39 10.8 V11.8 C14.05 12.8 17.38 14.5 17.66 19.5 H0.94 C1.23 14.5 4.55 12.8 7.21 11.8 V10.8 C6.26 9.8 5.5 8.3 5.5 6 C5.5 3 6.83 1 9.3 1Z" fill="#3c3f46"/><circle cx="16.4" cy="15" r="5.6" fill="#fff"/><circle cx="16.4" cy="15" r="4.6" fill="#3c3f46"/><path d="M16.4 12.7 V17.3 M14.1 15 H18.7" stroke="#fff" stroke-width="1.4"/></svg>
<div class="t" style="left:362px;top:591px;font-size:11px;color:#1a1a1a;width:22.3px;text-align-last:justify">邀请</div>
<!-- members -->
<svg style="left:415px;top:564px" width="24" height="21" viewBox="0 0 24 21"><path d="M14.2 1 C16.67 1 18 3 18 6 C18 8.3 17.24 9.8 16.29 10.8 V11.8 C18.95 12.8 22.27 14.5 22.56 19.5 H5.84 C6.12 14.5 9.45 12.8 12.11 11.8 V10.8 C11.16 9.8 10.4 8.3 10.4 6 C10.4 3 11.73 1 14.2 1Z" fill="#3c3f46"/><path d="M9.2 1 C11.67 1 13 3 13 6 C13 8.3 12.24 9.8 11.29 10.8 V11.8 C13.95 12.8 17.27 14.5 17.56 19.5 H0.84 C1.12 14.5 4.45 12.8 7.11 11.8 V10.8 C6.16 9.8 5.4 8.3 5.4 6 C5.4 3 6.73 1 9.2 1Z" fill="#fff" stroke="#fff" stroke-width="2.6"/><path d="M9.2 1 C11.67 1 13 3 13 6 C13 8.3 12.24 9.8 11.29 10.8 V11.8 C13.95 12.8 17.27 14.5 17.56 19.5 H0.84 C1.12 14.5 4.45 12.8 7.11 11.8 V10.8 C6.16 9.8 5.4 8.3 5.4 6 C5.4 3 6.73 1 9.2 1Z" fill="#3c3f46"/></svg>
<div class="t" style="left:409px;top:591px;font-size:11px;color:#1a1a1a;width:35.8px;text-align-last:justify">成员(4)</div>
<!-- chat -->
<svg style="left:472px;top:566px" width="19" height="19" viewBox="0 0 19 19"><path d="M2.5 0.5 H16.5 A2 2 0 0 1 18.5 2.5 V12.5 A2 2 0 0 1 16.5 14.5 H6 L1.5 18.5 V14.2 A2 2 0 0 1 0.5 12.5 V2.5 A2 2 0 0 1 2.5 0.5Z" fill="#3c3f46"/><circle cx="5" cy="7.5" r="1.3" fill="#fff"/><circle cx="9.5" cy="7.5" r="1.3" fill="#fff"/><circle cx="14" cy="7.5" r="1.3" fill="#fff"/></svg>
<div class="t" style="left:470px;top:591px;font-size:11px;color:#1a1a1a;width:22.3px;text-align-last:justify">聊天</div>
<!-- record -->
<svg style="left:525px;top:565px" width="20" height="20" viewBox="0 0 20 20"><circle cx="10" cy="10" r="9.9" fill="#3c3f46"/><circle cx="10" cy="10" r="7.3" fill="#fff"/><circle cx="10" cy="10" r="6.3" fill="#3c3f46"/></svg>
<div class="t" style="left:524px;top:591px;font-size:11px;color:#1a1a1a;width:22.3px;text-align-last:justify">录制</div>
<!-- reaction -->
<svg style="left:578px;top:564px" width="23" height="23" viewBox="0 0 23 23"><circle cx="13" cy="12.8" r="8.8" fill="#3c3f46"/><circle cx="10.6" cy="11.3" r="1.1" fill="#fff"/><circle cx="15.6" cy="11.3" r="1.1" fill="#fff"/><path d="M9.6 14.4 Q13 18.8 16.4 14.4Z" fill="#fff"/><path d="M1.2 6 V9.5 Q1.2 12 4.2 12 Q6.8 12 9.5 9 L9.5 6Z" fill="#3c3f46" stroke="#fff" stroke-width="2"/><path d="M1.2 6 V9.5 Q1.2 12 4.2 12 Q6.8 12 9.5 9 L9.5 6Z" fill="#3c3f46"/><path d="M2 7 V2.6 M4.3 7 V1.2 M6.6 7 V1.8 M8.8 7.5 V3.2" stroke="#3c3f46" stroke-width="1.8" stroke-linecap="round"/></svg>
<div class="t" style="left:578px;top:591px;font-size:11px;color:#1a1a1a;width:22.3px;text-align-last:justify">回应</div>
<!-- apps -->
<svg style="left:634px;top:566px" width="18" height="18" viewBox="0 0 18 18"><path d="M2 0 H8.3 V8.3 H0 V2 A2 2 0 0 1 2 0Z M9.7 9.7 H18 V16 A2 2 0 0 1 16 18 H9.7Z M0 9.7 H8.3 V18 H2 A2 2 0 0 1 0 16Z M9.7 0 H16 A2 2 0 0 1 18 2 V8.3 H9.7Z" fill="#3c3f46"/><rect x="12" y="2.3" width="3.6" height="3.6" fill="#fff"/></svg>
<div class="t" style="left:632px;top:591px;font-size:11px;color:#1a1a1a;width:22.3px;text-align-last:justify">应用</div>
<!-- settings -->
<svg style="left:687px;top:564.5px" width="20" height="20" viewBox="0 0 20 20"><path d="M6.40 3.76 L7.78 3.15 L8.00 1.33 L12.00 1.33 L12.22 3.15 L13.60 3.76 L14.82 4.65 L16.51 3.93 L18.51 7.40 L17.04 8.50 L17.20 10.00 L17.04 11.50 L18.51 12.60 L16.51 16.07 L14.82 15.35 L13.60 16.24 L12.22 16.85 L12.00 18.67 L8.00 18.67 L7.78 16.85 L6.40 16.24 L5.18 15.35 L3.49 16.07 L1.49 12.60 L2.96 11.50 L2.80 10.00 L2.96 8.50 L1.49 7.40 L3.49 3.93 L5.18 4.65Z" fill="#3c3f46" stroke="#3c3f46" stroke-width="1.6" stroke-linejoin="round"/><circle cx="10" cy="10" r="3.3" fill="#fff"/></svg>
<div class="t" style="left:686px;top:591px;font-size:11px;color:#1a1a1a;width:22.3px;text-align-last:justify">设置</div>
<!-- leave -->
<div class="a" style="left:866px;top:568px;width:82px;height:32px;border:1px solid #d0605e;border-radius:5px;background:#fff"></div>
<div class="t" style="left:880px;top:578.5px;font-size:13.6px;color:#d9534f;width:56.3px;text-align-last:justify">离开会议</div>


<!-- toast -->
<div class="a" style="left:310px;top:53px;width:340px;height:38px;border-radius:7px;background:#fff;box-shadow:0 1px 5px rgba(0,0,0,0.13)"></div>
<div class="a" style="left:322.5px;top:64.5px;width:14.5px;height:14.5px;border-radius:50%;background:#1b73f0"></div>
<div class="a" style="left:328.6px;top:67.3px;width:2.3px;height:5.6px;border-radius:1.2px;background:#fff"></div>
<div class="a" style="left:328.6px;top:74.2px;width:2.3px;height:2.3px;border-radius:50%;background:#fff"></div>
<div class="t" style="left:346px;top:66.5px;font-size:13.5px;color:#1a1a1a;width:274.8px;text-align-last:justify">会议已超过2人，自动转为60分钟限时会议。</div>
<svg style="left:624px;top:66px" width="12" height="12"><path d="M1 1 L11 11 M11 1 L1 11" stroke="#6b6e75" stroke-width="1.8"/></svg>
<div class="a" style="left:930px;top:0;width:30px;height:610px;background:linear-gradient(90deg,rgba(0,0,0,0),rgba(0,0,0,0.045));pointer-events:none"></div>
<script>
(function(){
  var d=document,s=d.createElement('span');
  s.style.cssText='position:absolute;left:-9999px;top:0;visibility:hidden;font-size:100px;font-family:"Liberation Sans",sans-serif;white-space:nowrap;line-height:1';
  s.textContent='\u4e2d\u4e2d\u4e2d\u4e2d';
  d.body.appendChild(s);
  var w=s.getBoundingClientRect().width;
  d.body.removeChild(s);
  if(w>=360)return;
  d.documentElement.className+=' nocjk';
  var re=/[\u3000-\u9fff\uff00-\uffef]+/g;
  var els=d.querySelectorAll('.t');
  for(var i=0;i<els.length;i++){
    var el=els[i],bold=parseInt(getComputedStyle(el).fontWeight)>=600;
    var walker=d.createTreeWalker(el,NodeFilter.SHOW_TEXT,null),nodes=[],n;
    while((n=walker.nextNode()))nodes.push(n);
    nodes.forEach(function(t){
      var txt=t.nodeValue;if(!re.test(txt))return;re.lastIndex=0;
      var frag=d.createDocumentFragment(),last=0,m;
      while((m=re.exec(txt))){
        if(m.index>last)frag.appendChild(d.createTextNode(txt.slice(last,m.index)));
        var sp=d.createElement('span');sp.className=bold?'cj cjb':'cj';sp.textContent=m[0];frag.appendChild(sp);
        last=m.index+m[0].length;
      }
      if(last<txt.length)frag.appendChild(d.createTextNode(txt.slice(last)));
      t.parentNode.replaceChild(frag,t);
    });
  }
})();
</script>
</body></html>
